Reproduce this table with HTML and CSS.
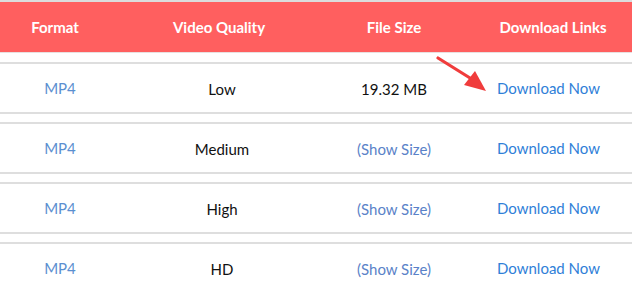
FILE: index.html
```html
<!DOCTYPE html>
<html>
<head>
<meta charset="utf-8">
<link rel="stylesheet" href="styles.css">
</head>
<body>
<div class="page">
  <div class="head">
    <div class="cell c1">Format</div>
    <div class="cell c2">Video Quality</div>
    <div class="cell c3">File Size</div>
    <div class="cell c4">Download Links</div>
  </div>
  <div class="rows">
    <div class="row">
      <div class="cell c1 fmt">MP4</div>
      <div class="cell c2">Low</div>
      <div class="cell c3">19.32 MB</div>
      <div class="cell c4 dl">Download Now</div>
    </div>
    <div class="row">
      <div class="cell c1 fmt">MP4</div>
      <div class="cell c2">Medium</div>
      <div class="cell c3 show">(Show Size)</div>
      <div class="cell c4 dl">Download Now</div>
    </div>
    <div class="row">
      <div class="cell c1 fmt">MP4</div>
      <div class="cell c2">High</div>
      <div class="cell c3 show">(Show Size)</div>
      <div class="cell c4 dl">Download Now</div>
    </div>
    <div class="row">
      <div class="cell c1 fmt">MP4</div>
      <div class="cell c2">HD</div>
      <div class="cell c3 show">(Show Size)</div>
      <div class="cell c4 dl">Download Now</div>
    </div>
  </div>
  <svg class="arrow" width="60" height="40" viewBox="0 0 60 40">
    <line x1="2" y1="2" x2="34" y2="22" stroke="#f03c3c" stroke-width="3.2" stroke-linecap="round"/>
    <polygon points="28,29 50,35 39,15" fill="#f03c3c"/>
  </svg>
</div>
</body>
</html>
```
FILE: styles.css
```css
html, body {
  margin: 0;
  padding: 0;
  background: #fff;
}
.page {
  position: relative;
  width: 632px;
  height: 285px;
  overflow: hidden;
  font-family: Lato, "Liberation Sans", sans-serif;
}
.head, .row {
  display: grid;
  grid-template-columns: 118px 202px 148px 170px;
  width: 638px;
  align-items: center;
}
.head {
  height: 50px;
  background: #ff5f5f;
  border-top: 2px solid #dcdcdc;
  border-bottom: 1px solid #e8e0e0;
  color: #fff;
  font-weight: bold;
  font-size: 15px;
}
.rows {
  display: flex;
  flex-direction: column;
  gap: 8px;
  margin-top: 9px;
}
.row {
  height: 48px;
  border-top: 2px solid #dedede;
  border-bottom: 2px solid #dedede;
  font-size: 15px;
  color: #111;
}
.cell {
  text-align: center;
  white-space: nowrap;
}
.head .c1 { padding-right: 8px; }
.row .c1 { padding-left: 2px; }
.row .c2 { padding-left: 6px; }
.fmt { color: #5b8fd0; }
.show { color: #5a82c8; }
.dl { color: #2f80d8; padding-right: 9px; }
.row .c2, .row .c3 { padding-top: 1px; }
.arrow {
  position: absolute;
  left: 436px;
  top: 56px;
}
```
